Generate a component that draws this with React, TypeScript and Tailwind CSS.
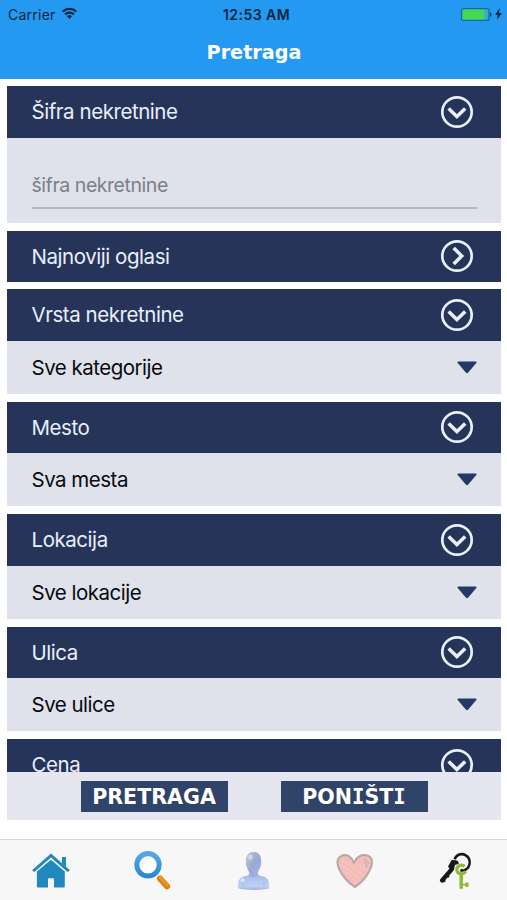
import React from "react";

function CircleIcon({ right = false }: { right?: boolean }) {
  return (
    <svg width="34" height="34" viewBox="0 0 34 34" fill="none" stroke="#e9effb" className="shrink-0">
      <circle cx="17" cy="17" r="14.7" strokeWidth="2.7" />
      <path d={right ? "M13.7 8.9 L21.7 16.9 L13.7 24.9" : "M8.6 13.4 L16.9 21.5 L25.2 13.4"} strokeWidth="3.5" />
    </svg>
  );
}

function Bar({ title, right }: { title: string; right?: boolean }) {
  return (
    <div className="flex h-[51.5px] shrink-0 items-center justify-between bg-[#263459] pr-[27px] pl-[24.5px] text-[#e9effb]">
      <span className="pt-[2px] tracking-[-0.45px]">{title}</span>
      <CircleIcon right={right} />
    </div>
  );
}

function Select({ title, value }: { title: string; value: string }) {
  return (
    <section className="mb-[8px] shrink-0">
      <Bar title={title} />
      <div className="flex h-[53px] items-center justify-between bg-[#dfe2ea] pr-[24px] pl-[24.5px] text-[#080a10]">
        <span className="pt-[2px] tracking-[-0.5px]">{value}</span>
        <svg width="20" height="13" viewBox="0 0 20 13">
          <path d="M1.4 .4h17.2c1 0 1.3.8.7 1.5L11 11.8c-.6.6-1.4.6-2 0L.7 1.9C.1 1.2.4.4 1.4.4Z" fill="#263866" />
        </svg>
      </div>
    </section>
  );
}

function HomeIcon() {
  return (
    <svg width="38" height="36" viewBox="0 0 38 36" fill="#2188bd">
      <path d="M30 4h4v10l-4-3.6Z" />
      <path d="M19 .6 0 17.3 2.4 18.9 19 4.6l16.6 14.3 2.4-1.6Z" />
      <path d="M19 6.8 32.8 18.5V33.2q0 1.3-1.3 1.3H22V26q0-.8-.8-.8h-4.4q-.8 0-.8.8v8.5H6.2q-1.3 0-1.3-1.3V18.5Z" />
    </svg>
  );
}

function SearchIcon() {
  return (
    <svg width="38" height="41" viewBox="0 0 38 41">
      <defs>
        <linearGradient id="ring" x1="0" y1="0" x2="0" y2="1">
          <stop offset="0" stopColor="#55a9e2" />
          <stop offset="1" stopColor="#2b88cf" />
        </linearGradient>
        <linearGradient id="lens" x1="0" y1="0" x2="1" y2="1">
          <stop offset="0" stopColor="#d9dfe3" />
          <stop offset=".5" stopColor="#fff" />
        </linearGradient>
      </defs>
      <path d="M27 28.5 34 36.3" stroke="#d58218" strokeWidth="6.2" strokeLinecap="round" />
      <path d="M27.5 27.5 34.5 35.3" stroke="#eb9526" strokeWidth="3.4" strokeLinecap="round" />
      <circle cx="15" cy="14.8" r="11.2" fill="url(#lens)" stroke="url(#ring)" strokeWidth="5" />
    </svg>
  );
}

function PersonIcon() {
  return (
    <svg width="33" height="40" viewBox="0 0 33 40">
      <defs>
        <linearGradient id="person" x1="0" y1="0" x2="1" y2="1">
          <stop offset="0" stopColor="#c0c8e0" />
          <stop offset=".5" stopColor="#99a8d2" />
          <stop offset="1" stopColor="#a9baeb" />
        </linearGradient>
        <linearGradient id="base" x1="0" y1="0" x2="0" y2="1">
          <stop offset="0" stopColor="#8fa2d8" />
          <stop offset=".65" stopColor="#aabdec" />
          <stop offset=".9" stopColor="#bcd2f7" />
          <stop offset="1" stopColor="#a9afe0" />
        </linearGradient>
      </defs>
      <path d="M1.3 37.2C.4 31.5 1.8 27.3 6 25.8c4.3-1 6.5-1.2 6.2-4.2-.4-3-3.2-5.3-3.2-10.7C9 4.6 12 1 16.6 1s7.6 3.6 7.6 9.9c0 5.4-2.8 7.7-3.2 10.7-.3 3 1.9 3.2 6.2 4.2 4.2 1.5 5.5 5.7 4.7 11.4-5.2 2.3-25.4 2.3-30.6 0Z" fill="url(#base)" />
      <path d="M12.2 21.6C11.8 18.6 9 16.3 9 10.9 9 4.6 12 1 16.6 1s7.6 3.6 7.6 9.9c0 5.4-2.8 7.7-3.2 10.7-.2 3-1 5-4.4 5s-4.2-2-4.4-5Z" fill="url(#person)" />
      <ellipse cx="13.4" cy="6.3" rx="2.4" ry="2.7" fill="#dfe4f2" opacity=".7" />
      <ellipse cx="5.5" cy="29.3" rx="2" ry="2" fill="#e5eafa" opacity=".9" />
      <path d="M6 31.5v4M27 31.5v4" stroke="#8390c8" strokeWidth=".8" opacity=".5" />
    </svg>
  );
}

function HeartIcon() {
  return (
    <svg width="38" height="36" viewBox="0 0 38 36">
      <path d="M17.8 9.8C16.2 4.2 11 .8 6 2.6 1 4.8.7 10.2 3 15.7 6.3 22.6 12.5 30 18.8 34c6.2-3.4 12.4-11 15.6-18.3 2.5-5.7 2.3-11.5-2.9-13.2C25.7.8 20 4 17.8 9.8Z" fill="#f3bcb9" stroke="#b5a7a4" strokeWidth="2" strokeLinejoin="round" />
      <path d="m6 7 23 16M4 11l20 15M21 11l11 7M8 18l13 11M24 6l8 10" stroke="#f6cbc7" strokeWidth="1" />
      <path d="m27 8 4 5m-2-7 4 5m-3 1 1 3" stroke="#c69f9d" strokeWidth=".9" />
    </svg>
  );
}

function KeysIcon() {
  return (
    <svg width="34" height="38" viewBox="0 0 34 38" fill="none">
      <path d="M15.6 7.2C17.5 2.5 22.5.8 26.8 3.3c5.5 3.3 5 11.8-.6 14.5-1.6.8-3.3.8-4.8.2" stroke="#15191b" strokeWidth="2.5" />
      <path d="M13 8.3 18.6 9.2 19.3 11.5 15.5 12.6 14.5 17.6 11.8 17.8 9.5 14.5Z" fill="#15191b" stroke="#15191b" strokeWidth="1" strokeLinejoin="round" />
      <path d="M13 17 3 28.5" stroke="#15191b" strokeWidth="4.2" strokeLinecap="round" />
      <path d="m2.8 26.3 3.2 3.5M6.5 22l3.4 3.2" stroke="#15191b" strokeWidth="2.4" />
      <path d="M25.6 14.2c-2.8-2.3-7.3-.8-7.8 2.8-.4 3.4 2.7 5.4 5.6 4.7 1.5-.3 2.7-1.3 3.3-2.5" stroke="#8fba32" strokeWidth="3.2" />
      <path d="M22.2 21v15.8" stroke="#8fba32" strokeWidth="3.5" />
      <path d="M23.5 31.8h3v-1.2h3v4.4h-3v-1.4h-3Z" fill="#8fba32" />
    </svg>
  );
}

export default function App() {
  return (
    <main className="flex h-[900px] w-[507px] flex-col overflow-hidden bg-white font-['Inter','Liberation_Sans',sans-serif] text-[20.5px]">
      <header className="h-[79px] shrink-0 bg-[#2399f2]">
        <div className="grid h-[28px] grid-cols-3 items-center pr-[5px] pl-[8px] text-[14px] text-[#08243c]">
          <div className="flex items-center gap-[6px]">
            <span className="tracking-[0.25px]">Carrier</span>
            <svg width="15" height="12" viewBox="0 0 15 12" fill="none" stroke="#08243c" strokeWidth="2.3" className="-mt-[2px]">
              <path d="M.8 4.5a9.8 9.8 0 0 1 13.4 0M3.2 7.4a6.2 6.2 0 0 1 8.6 0" />
              <path d="M7.5 11.9 5 9.3a3.6 3.6 0 0 1 5 0Z" fill="#08243c" stroke="none" />
            </svg>
          </div>
          <span className="pl-[3px] text-center font-semibold tracking-[0.45px] whitespace-nowrap">12:53 AM</span>
          <div className="flex items-center justify-end gap-[3px]">
            <svg width="31" height="13" viewBox="0 0 31 13">
              <rect x=".6" y=".6" width="27.4" height="11.8" rx="2" fill="#3ba7dd" stroke="#176998" strokeWidth="1.2" />
              <path d="M1.5 1.5h22v10h-22Z" fill="#45d853" />
              <path d="M29 4.2c2 .6 2 4 0 4.6Z" fill="#0c3b5d" />
            </svg>
            <svg width="7" height="12" viewBox="0 0 7 12"><path d="M4.7 0 .2 6.8h2.7L2 12l4.8-7H4Z" fill="#06243d" /></svg>
          </div>
        </div>
        <h1 className="pt-[11px] pl-px text-center font-['DejaVu_Sans',sans-serif] text-[19.2px] leading-[28px] font-bold text-white">Pretraga</h1>
      </header>

      <div className="flex h-[693px] shrink-0 flex-col overflow-hidden pt-[7px] pr-[6px] pl-[7px]">
        <section className="mb-[8px] shrink-0">
          <Bar title="Šifra nekretnine" />
          <div className="h-[85px] bg-[#dfe2ea] px-[24.5px] pt-[26px]">
            <div className="h-[45px] border-b-2 border-[#b5b9c1] text-[19.5px] leading-[42px] tracking-[-0.45px] text-[#7b7f88]">šifra nekretnine</div>
          </div>
        </section>
        <section className="mb-[7px] shrink-0">
          <Bar title="Najnoviji oglasi" right />
        </section>
        <Select title="Vrsta nekretnine" value="Sve kategorije" />
        <Select title="Mesto" value="Sva mesta" />
        <Select title="Lokacija" value="Sve lokacije" />
        <Select title="Ulica" value="Sve ulice" />
        <Bar title="Cena" />
      </div>

      <div className="mr-[6px] ml-[7px] flex h-[48px] shrink-0 gap-[53px] bg-[#e5e6f0] pt-[9px] pl-[73.5px] font-['DejaVu_Sans',sans-serif] text-[20.6px] leading-[31px] font-bold text-white">
        <button className="h-[31px] w-[147px] bg-[#304369] pt-px">PRETRAGA</button>
        <button className="h-[31px] w-[147px] bg-[#304369] pt-px">
          PON<span className="font-['DejaVu_Sans_Mono',monospace]">I</span>ŠT<span className="font-['DejaVu_Sans_Mono',monospace]">I</span>
        </button>
      </div>

      <nav className="mt-[19px] grid h-[61px] shrink-0 grid-cols-5 items-center justify-items-center border-t border-[#d6d6d6] bg-[#f7f7f7] pt-px">
        <HomeIcon />
        <SearchIcon />
        <PersonIcon />
        <HeartIcon />
        <KeysIcon />
      </nav>
    </main>
  );
}
